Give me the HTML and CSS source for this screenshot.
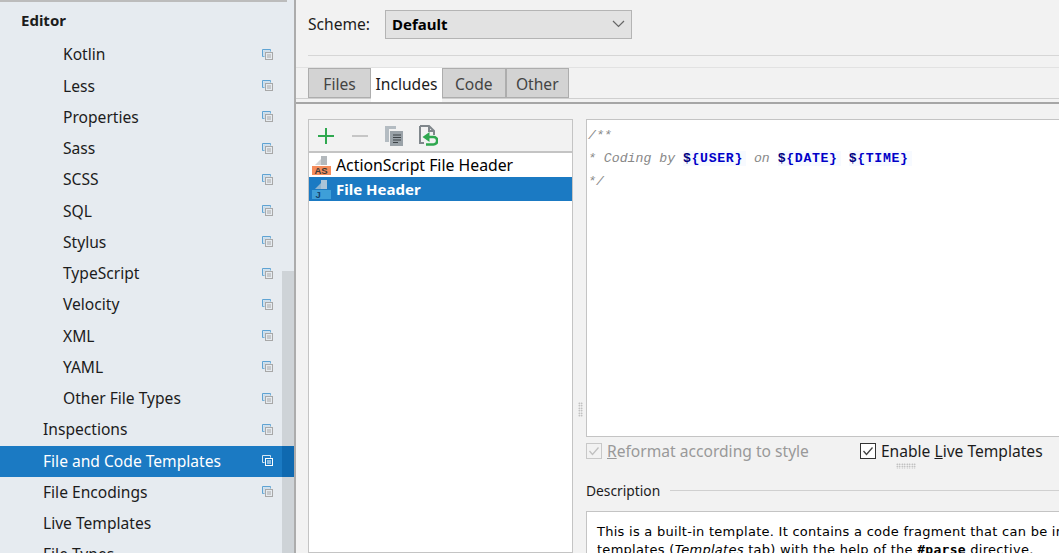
FILE: index.html
```html
<!DOCTYPE html>
<html lang="en">
<head>
<meta charset="utf-8">
<title>File and Code Templates</title>
<link rel="stylesheet" href="styles.css">
</head>
<body>
<svg class="defs" width="0" height="0">
  <symbol id="copy" viewBox="0 0 11 11">
    <path d="M.5.5h8v2M.5.5v7h2" fill="none" stroke="#5fa3d3"/>
    <path d="M1.500 1.500h7v1h-6v5h-1z" fill="#b9d6ea"/>
    <rect x="3.500" y="3.500" width="7" height="7" fill="none" stroke="#a8a8a8"/>
    <path d="M5 6h4M5 8h4" stroke="#a8a8a8"/>
  </symbol>
  <symbol id="copywhite" viewBox="0 0 11 11">
    <path d="M.5.5h8v2M.5.5v7h2" fill="none" stroke="#d5e6f3"/>
    <rect x="3.500" y="3.500" width="7" height="7" fill="none" stroke="#fff"/>
    <path d="M5 6h4M5 8h4" stroke="#fff"/>
  </symbol>
</svg>
<div class="app">
  <aside class="sidebar">
    <div class="sidebar-top"></div>
    <div class="heading">Editor</div>
    <ul class="tree">
      <li class="row sub"><span>Kotlin</span><svg class="ico"><use href="#copy"/></svg></li>
      <li class="row sub"><span>Less</span><svg class="ico"><use href="#copy"/></svg></li>
      <li class="row sub"><span>Properties</span><svg class="ico"><use href="#copy"/></svg></li>
      <li class="row sub"><span>Sass</span><svg class="ico"><use href="#copy"/></svg></li>
      <li class="row sub"><span>SCSS</span><svg class="ico"><use href="#copy"/></svg></li>
      <li class="row sub"><span>SQL</span><svg class="ico"><use href="#copy"/></svg></li>
      <li class="row sub"><span>Stylus</span><svg class="ico"><use href="#copy"/></svg></li>
      <li class="row sub"><span>TypeScript</span><svg class="ico"><use href="#copy"/></svg></li>
      <li class="row sub"><span>Velocity</span><svg class="ico"><use href="#copy"/></svg></li>
      <li class="row sub"><span>XML</span><svg class="ico"><use href="#copy"/></svg></li>
      <li class="row sub"><span>YAML</span><svg class="ico"><use href="#copy"/></svg></li>
      <li class="row sub"><span>Other File Types</span><svg class="ico"><use href="#copy"/></svg></li>
      <li class="row"><span>Inspections</span><svg class="ico"><use href="#copy"/></svg></li>
      <li class="row selected"><span>File and Code Templates</span><svg class="ico"><use href="#copywhite"/></svg></li>
      <li class="row"><span>File Encodings</span><svg class="ico"><use href="#copy"/></svg></li>
      <li class="row"><span>Live Templates</span></li>
      <li class="row"><span>File Types</span></li>
    </ul>
    <div class="scrollbar"></div>
  </aside>
  <main class="main">
    <div class="scheme">
      <label class="scheme-label">Scheme:</label>
      <div class="select"><b>Default</b>
        <svg class="chev" width="13" height="8" viewBox="0 0 13 8"><path d="M1 1l5.500 5.500L12 1" fill="none" stroke="#666" stroke-width="1.200"/></svg>
      </div>
    </div>
    <div class="rule"></div>
    <div class="tabbar">
      <div class="tabs">
        <div class="tab">Files</div>
        <div class="tab active">Includes</div>
        <div class="tab">Code</div>
        <div class="tab">Other</div>
      </div>
    </div>
    <div class="content">
      <section class="listbox">
        <div class="toolbar">
          <svg width="16" height="16" viewBox="0 0 16 16"><path d="M8 0v16M0 8h16" stroke="#2fa84f" stroke-width="2"/></svg>
          <svg width="16" height="16" viewBox="0 0 16 16"><path d="M0 8h16" stroke="#c6c6c6" stroke-width="2"/></svg>
          <svg width="18" height="20" viewBox="0 0 18 20"><path d="M0 0h11v3H4v13H0z" fill="#b4bcc2"/><rect x="5" y="5" width="13" height="15" fill="#9aa2a8"/><path d="M8 9h8M8 11.500h8M8 14h8M8 16.500h5" stroke="#3d4347"/></svg>
          <svg width="19" height="21" viewBox="0 0 19 21"><path d="M1 1h9l5 5v4M10 1v5h5M1 1v17h4" fill="none" stroke="#80878c" stroke-width="2"/><path d="M9 12h5.500a3.700 3.700 0 0 1 0 7.500H7" fill="none" stroke="#2fa84f" stroke-width="2.700"/><path d="M10.500 7l-7 5 7 5z" fill="#2fa84f"/></svg>
        </div>
        <ul class="files">
          <li class="file">
            <svg width="19" height="20" viewBox="0 0 19 20"><path d="M3 10l6-6v6z" fill="#d2d5d7"/><rect x="9" y="1" width="6" height="9" fill="#b4b9bd"/><rect y="11" width="19" height="9" fill="#f58d5c"/><text x="2.500" y="19" class="as">AS</text></svg>
            <span>ActionScript File Header</span>
          </li>
          <li class="file current">
            <svg width="19" height="20" viewBox="0 0 19 20"><path d="M3 10l6-6v6z" fill="#8fb4d0"/><rect x="9" y="1" width="6" height="9" fill="#a9c3d8"/><rect y="11" width="19" height="9" fill="#3e9fd8"/><text x="3.500" y="19" class="j">J</text></svg>
            <span>File Header</span>
          </li>
        </ul>
      </section>
      <div class="split">
        <div class="grip"></div>
      </div>
      <section class="right">
        <div class="editor"><pre class="code"><i>/**</i>
<i>* Coding by </i><span class="var"><b>$</b>{USER}</span> <i>on </i><span class="var"><b>$</b>{DATE}</span> <span class="var"><b>$</b>{TIME}</span>
<i>*/</i></pre></div>
        <div class="options">
          <label class="check disabled"><svg width="16" height="16" viewBox="0 0 16 16"><rect x=".5" y=".5" width="15" height="15" fill="none" stroke="#c8c8c8"/><path d="M3.500 8l3 3.500 6-7" fill="none" stroke="#c0c0c0" stroke-width="1.300"/></svg><span><u>R</u>eformat according to style</span></label>
          <label class="check"><svg width="16" height="16" viewBox="0 0 16 16"><rect x=".5" y=".5" width="15" height="15" fill="#fff" stroke="#333"/><path d="M3.500 8l3 3.500 6-7" fill="none" stroke="#444" stroke-width="1.300"/></svg><span>Enable <u>L</u>ive Templates</span></label>
        </div>
        <div class="hgrip"></div>
        <div class="desc-head"><span>Description</span><div class="desc-line"></div></div>
        <div class="desc">This is a built-in template. It contains a code fragment that can be included into file<br>templates (<i>Templates</i> tab) with the help of the <b class="kw">#parse</b> directive.</div>
      </section>
    </div>
  </main>
</div>
</body>
</html>
```
FILE: styles.css
```css
* { box-sizing: border-box; }
html, body { margin: 0; height: 100%; overflow: hidden; }
body { font-family: "Noto Sans", "Open Sans", sans-serif; font-size: 15.6px; color: #1c1c1c; background: #f2f2f2; }
.defs { position: absolute; }
.app { display: flex; height: 553px; width: 1059px; overflow: hidden; }

.sidebar { position: relative; width: 296px; flex: none; background: #e6ebf0; border-right: 2px solid #acacac; }
.sidebar-top { height: 2px; width: 287px; background: #bcbcbc; }
.heading { height: 37.500px; padding: 8px 0 0 21px; font-weight: 700; font-size: 15px; line-height: 20px; }
.tree { list-style: none; margin: 0; padding: 0; }
.row { position: relative; z-index: 1; height: 31.250px; display: flex; align-items: center; justify-content: space-between; padding: 0 21px 1.500px 43px; white-space: nowrap; line-height: 20px; }
.row.sub { padding-left: 63px; }
.row.selected { background: #1b7ac3; color: #fff; }
.ico { width: 11px; height: 11px; flex: none; }
.scrollbar { position: absolute; right: 0; top: 271px; bottom: 0; width: 12px; background: #ced3d7; }
.row.selected::after { content: ""; position: absolute; right: 0; top: 0; bottom: 0; width: 12px; background: #0f69b0; z-index: -1; }

.main { flex: 1; min-width: 0; display: flex; flex-direction: column; }
.scheme { height: 55px; flex: none; padding: 10px 0 0 12px; display: flex; align-items: flex-start; }
.scheme-label { line-height: 28px; width: 77px; flex: none; }
.select { width: 247px; height: 29px; background: #e2e2e2; border: 1px solid #b4b4b4; display: flex; align-items: center; justify-content: space-between; padding: 0 6px 2px 6px; color: #000; font-size: 15px; }
.rule { height: 12px; margin-left: 12px; border-top: 1px solid #d6d6d6; flex: none; }
.tabbar { height: 37px; flex: none; border-top: 1px solid #e2e2e2; border-bottom: 2px solid #a6a6a6; }
.tabs { height: 31px; display: flex; padding-left: 12px; border-bottom: 1px solid #cfcfcf; }
.tab { width: 63.500px; height: 30px; background: #d3d3d3; border: 1px solid #adadad; text-align: center; line-height: 30px; color: #444; }
.tab.active { width: 71px; height: 34px; background: #fff; color: #1c1c1c; border: none; position: relative; z-index: 1; line-height: 32px; }
.tab:nth-child(1) { width: 63px; }

.content { flex: 1; min-height: 0; display: flex; padding: 15px 0 0 12px; }
.listbox { width: 265px; flex: none; background: #fff; border: 1px solid #c4c4c4; }
.toolbar { height: 33px; background: #f2f2f2; border-bottom: 2px solid #c4c4c4; display: flex; align-items: center; padding-left: 9px; gap: 18px; }
.toolbar svg:nth-child(3) { margin-left: -1px; }
.toolbar svg:nth-child(4) { margin-left: -2px; }
.files { list-style: none; margin: 0; padding: 0; }
.file { height: 24px; display: flex; align-items: center; gap: 5px; padding-left: 3px; color: #000; white-space: nowrap; font-size: 15.800px; }
.file.current { background: #1b7ac3; color: #fff; font-weight: 700; font-size: 15px; }
.as { font: 700 9.500px "Liberation Sans", sans-serif; fill: #3a3a3a; }
.j { font: 700 9.500px "Liberation Sans", sans-serif; fill: #16426b; }

.split { width: 13px; flex: none; display: flex; justify-content: center; padding: 283px 0 0 1px; }
.grip { width: 5px; height: 15px; background-image: radial-gradient(#a6a6a6 0.700px, transparent 0.900px); background-size: 2.500px 2.500px; }
.right { flex: 1; min-width: 0; display: flex; flex-direction: column; width: 473px; }
.editor { height: 318px; flex: none; background: #fff; border: 1px solid #c4c4c4; border-right: none; padding: 4px 0 0 1px; }
.code { margin: 0; font: 13.200px/23px "Liberation Mono", monospace; color: #888; }
.var { background: #f7faff; color: #0000c8; font-weight: 700; letter-spacing: .66px; padding-right: 3px; }
.var b { color: #000080; }
.options { height: 26px; flex: none; display: flex; gap: 51px; padding-top: 3px; }
.check { display: flex; align-items: center; gap: 5px; white-space: nowrap; height: 22px; }
.check.disabled { color: #999; }
.hgrip { height: 6px; width: 20px; margin-left: 310px; flex: none; background-image: radial-gradient(#a6a6a6 0.700px, transparent 0.900px); background-size: 2.500px 2.500px; }
.desc-head { height: 42px; flex: none; display: flex; align-items: center; gap: 10px; font-size: 13.800px; }
.desc-line { flex: 1; height: 1px; background: #d0d0d0; }
.desc { flex: 1; width: 600px; background: #fff; border: 1px solid #c4c4c4; padding: 11px 10px 0; font: 13px/18px "DejaVu Sans", sans-serif; letter-spacing: .27px; color: #000; white-space: nowrap; }
.kw { font-family: "DejaVu Sans Mono", monospace; }
```
